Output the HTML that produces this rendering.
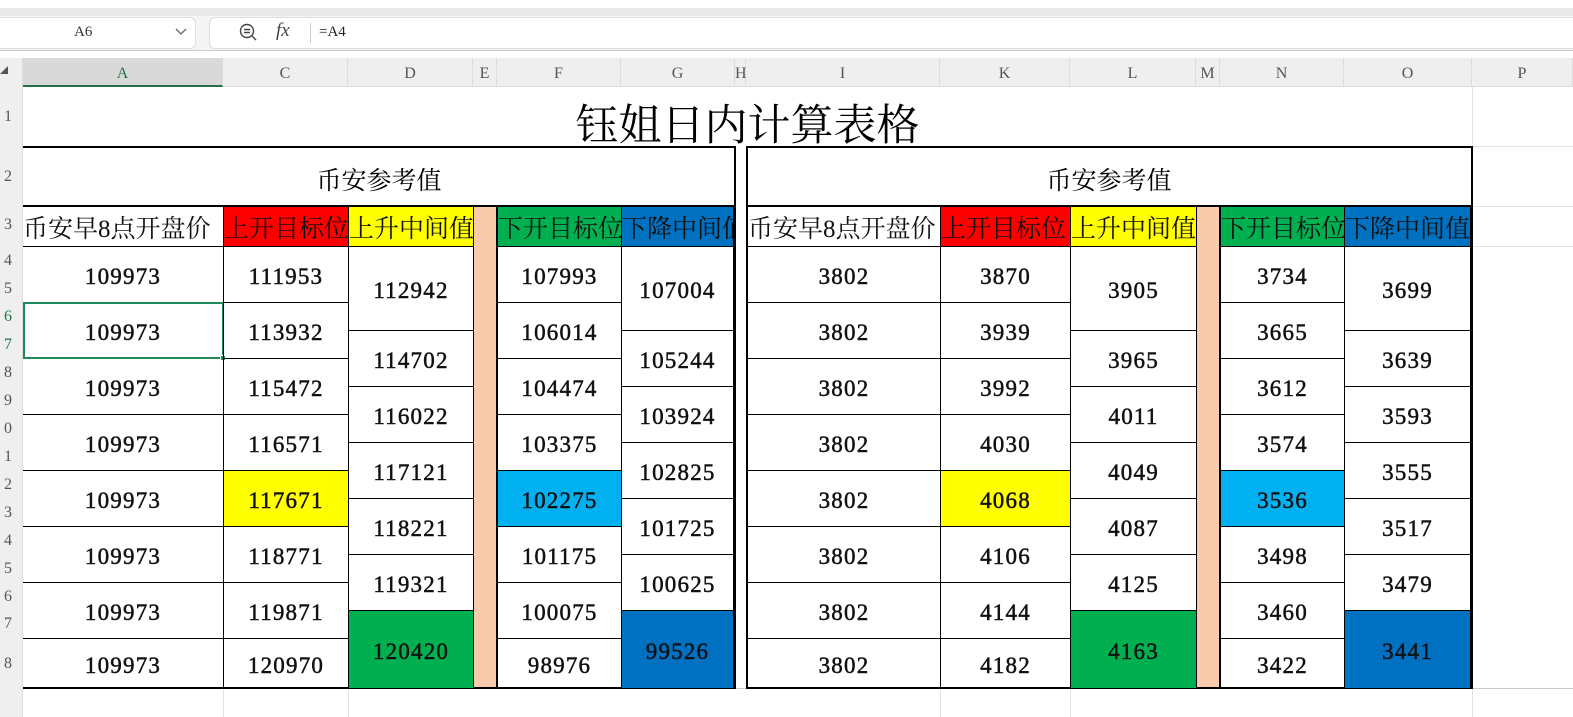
<!DOCTYPE html>
<html><head><meta charset="utf-8"><style>
*{margin:0;padding:0;box-sizing:border-box}
body{width:1573px;height:717px;position:relative;overflow:hidden;background:#fff;font-family:"Liberation Serif","Noto Serif CJK SC",serif}
.a{position:absolute}
.c{position:absolute;border:1px solid #000;display:flex;align-items:center;justify-content:center;font-size:23px;font-weight:normal;-webkit-text-stroke:0.5px #111;letter-spacing:1.2px;padding-top:5px;color:#111;white-space:nowrap;overflow:hidden}
.h{font-weight:normal;-webkit-text-stroke:0;letter-spacing:0;padding-top:0;font-size:25px;font-family:"Liberation Serif","Noto Serif CJK SC",serif;justify-content:flex-start}
.ch{position:absolute;top:58px;height:29px;line-height:32px;font-size:16px;color:#555;text-align:center;border-right:1px solid #ddd}
.rn{position:absolute;left:0;width:12px;text-align:right;font-size:16px;color:#555;overflow:hidden;direction:rtl}
.y{background:#ffff00}.r{background:#ff0000}.g{background:#00b050}.b{background:#0070c0}.lb{background:#00b0f0}.p{background:#f8cbad}
</style></head><body>
<div class="a" style="left:0;top:0;width:1573px;height:8px;background:#fff"></div>
<div class="a" style="left:0;top:8px;width:1573px;height:8px;background:#e9e9e9"></div>
<div class="a" style="left:0;top:16px;width:1573px;height:34px;background:#f5f5f5"></div>
<div class="a" style="left:-10px;top:17px;width:206px;height:32px;background:#fff;border:1px solid #ddd;border-radius:6px"></div>
<div class="a" style="left:74px;top:24px;font-size:15px;color:#333">A6</div>
<svg class="a" style="left:175px;top:27px" width="12" height="10"><path d="M1 2 L6 7 L11 2" stroke="#666" fill="none" stroke-width="1.3"/></svg>
<div class="a" style="left:209px;top:17px;width:1370px;height:32px;background:#fff;border:1px solid #ddd;border-radius:6px"></div>
<svg class="a" style="left:238px;top:22px" width="20" height="20"><circle cx="9" cy="9" r="6.5" stroke="#444" fill="none" stroke-width="1.4"/><path d="M6 7.5h6M6 10.5h6M14 14l4 4" stroke="#444" stroke-width="1.4"/></svg>
<div class="a" style="left:276px;top:20px;font-size:19px;font-style:italic;color:#444">fx</div>
<div class="a" style="left:310px;top:23px;width:1px;height:20px;background:#ccc"></div>
<div class="a" style="left:319px;top:24px;font-size:15px;color:#222">=A4</div>
<div class="a" style="left:0;top:50px;width:1573px;height:1px;background:#ccc"></div>
<div class="a" style="left:0;top:58px;width:1573px;height:29px;background:#efefef;border-bottom:1px solid #ddd"></div>
<div class="a" style="left:0;top:58px;width:23px;height:659px;background:#efefef;border-right:1px solid #ddd"></div>
<div class="a" style="left:0;top:66px;width:0;height:0;border-left:8px solid transparent;border-bottom:8px solid #555"></div>
<div class="ch" style="left:23px;width:200px;background:#d9d9d9;border-bottom:2px solid #217346;color:#217346">A</div>
<div class="ch" style="left:223px;width:125px">C</div>
<div class="ch" style="left:348px;width:125px">D</div>
<div class="ch" style="left:473px;width:24px">E</div>
<div class="ch" style="left:497px;width:124px">F</div>
<div class="ch" style="left:621px;width:114px">G</div>
<div class="ch" style="left:735px;width:11px">H</div>
<div class="ch" style="left:746px;width:194px">I</div>
<div class="ch" style="left:940px;width:130px">K</div>
<div class="ch" style="left:1070px;width:126px">L</div>
<div class="ch" style="left:1196px;width:24px">M</div>
<div class="ch" style="left:1220px;width:124px">N</div>
<div class="ch" style="left:1344px;width:128px">O</div>
<div class="ch" style="left:1472px;width:101px">P</div>
<div class="rn" style="top:108px">1</div><div class="rn" style="top:168px">2</div><div class="rn" style="top:216px">3</div>
<div class="rn" style="top:252px">4</div><div class="rn" style="top:280px">5</div><div class="rn" style="top:308px;color:#217346">6</div><div class="rn" style="top:336px;color:#217346">7</div>
<div class="rn" style="top:364px">8</div><div class="rn" style="top:392px">9</div><div class="rn" style="top:420px">0</div><div class="rn" style="top:448px">1</div>
<div class="rn" style="top:476px">2</div><div class="rn" style="top:504px">3</div><div class="rn" style="top:532px">4</div><div class="rn" style="top:560px">5</div>
<div class="rn" style="top:588px">6</div><div class="rn" style="top:615px">7</div><div class="rn" style="top:655px">8</div>
<div class="a" style="left:1472px;top:87px;width:1px;height:630px;background:#e2e2e2"></div>
<div class="a" style="left:1472px;top:146px;width:101px;height:1px;background:#e2e2e2"></div>
<div class="a" style="left:1472px;top:206px;width:101px;height:1px;background:#e2e2e2"></div>
<div class="a" style="left:1472px;top:246px;width:101px;height:1px;background:#e2e2e2"></div>
<div class="a" style="left:23px;top:688px;width:1550px;height:1px;background:#ccc"></div>
<div class="a" style="left:223px;top:688px;width:1px;height:29px;background:#e2e2e2"></div>
<div class="a" style="left:348px;top:688px;width:1px;height:29px;background:#e2e2e2"></div>
<div class="a" style="left:940px;top:688px;width:1px;height:29px;background:#e2e2e2"></div>
<div class="a" style="left:1070px;top:688px;width:1px;height:29px;background:#e2e2e2"></div>
<div class="a" style="left:23px;top:92px;width:1449px;text-align:center;font-size:43px;font-family:'Noto Serif CJK SC',serif;color:#000">钰姐日内计算表格</div>
<!-- LEFT TABLE -->
<div class="a" style="left:23px;top:146px;width:713px;height:543px;border:2px solid #000;border-left:none"></div>
<div class="a" style="left:23px;top:205px;width:712px;height:2px;background:#000"></div>
<div class="a" style="left:23px;top:161px;width:712px;text-align:center;font-size:25px;font-family:'Noto Serif CJK SC',serif">币安参考值</div>
<div class="c h" style="left:23px;top:206px;width:201px;height:41px;border-left:none">币安早8点开盘价</div>
<div class="c h r" style="left:223px;top:206px;width:126px;height:41px">上开目标位</div>
<div class="c h y" style="left:348px;top:206px;width:126px;height:41px">上升中间值</div>
<div class="a p" style="left:473px;top:206px;width:24px;height:482px;border:1px solid #000"></div>
<div class="c h g" style="left:497px;top:206px;width:125px;height:41px">下开目标位</div>
<div class="c h b" style="left:621px;top:206px;width:113px;height:41px">下降中间值</div>
<div class="c" style="left:23px;top:246px;width:201px;height:57px;border-left:none">109973</div>
<div class="c" style="left:23px;top:302px;width:201px;height:57px;border-left:none">109973</div>
<div class="c" style="left:23px;top:358px;width:201px;height:57px;border-left:none">109973</div>
<div class="c" style="left:23px;top:414px;width:201px;height:57px;border-left:none">109973</div>
<div class="c" style="left:23px;top:470px;width:201px;height:57px;border-left:none">109973</div>
<div class="c" style="left:23px;top:526px;width:201px;height:57px;border-left:none">109973</div>
<div class="c" style="left:23px;top:582px;width:201px;height:57px;border-left:none">109973</div>
<div class="c" style="left:23px;top:638px;width:201px;height:50px;border-left:none;border-bottom:none">109973</div>
<div class="a" style="left:23px;top:302px;width:201px;height:57px;border:2px solid #1e8a5a"></div>
<div class="a" style="left:220px;top:355px;width:6px;height:6px;background:#1e8a5a;border:1px solid #fff"></div>
<div class="c" style="left:223px;top:246px;width:126px;height:57px">111953</div>
<div class="c" style="left:223px;top:302px;width:126px;height:57px">113932</div>
<div class="c" style="left:223px;top:358px;width:126px;height:57px">115472</div>
<div class="c" style="left:223px;top:414px;width:126px;height:57px">116571</div>
<div class="c y" style="left:223px;top:470px;width:126px;height:57px">117671</div>
<div class="c" style="left:223px;top:526px;width:126px;height:57px">118771</div>
<div class="c" style="left:223px;top:582px;width:126px;height:57px">119871</div>
<div class="c" style="left:223px;top:638px;width:126px;height:50px;border-bottom:none">120970</div>
<div class="c" style="left:348px;top:246px;width:126px;height:85px">112942</div>
<div class="c" style="left:348px;top:330px;width:126px;height:57px">114702</div>
<div class="c" style="left:348px;top:386px;width:126px;height:57px">116022</div>
<div class="c" style="left:348px;top:442px;width:126px;height:57px">117121</div>
<div class="c" style="left:348px;top:498px;width:126px;height:57px">118221</div>
<div class="c" style="left:348px;top:554px;width:126px;height:57px">119321</div>
<div class="c g" style="left:348px;top:610px;width:126px;height:78px;border-bottom:none">120420</div>
<div class="c" style="left:497px;top:246px;width:125px;height:57px">107993</div>
<div class="c" style="left:497px;top:302px;width:125px;height:57px">106014</div>
<div class="c" style="left:497px;top:358px;width:125px;height:57px">104474</div>
<div class="c" style="left:497px;top:414px;width:125px;height:57px">103375</div>
<div class="c lb" style="left:497px;top:470px;width:125px;height:57px">102275</div>
<div class="c" style="left:497px;top:526px;width:125px;height:57px">101175</div>
<div class="c" style="left:497px;top:582px;width:125px;height:57px">100075</div>
<div class="c" style="left:497px;top:638px;width:125px;height:50px;border-bottom:none">98976</div>
<div class="c" style="left:621px;top:246px;width:113px;height:85px">107004</div>
<div class="c" style="left:621px;top:330px;width:113px;height:57px">105244</div>
<div class="c" style="left:621px;top:386px;width:113px;height:57px">103924</div>
<div class="c" style="left:621px;top:442px;width:113px;height:57px">102825</div>
<div class="c" style="left:621px;top:498px;width:113px;height:57px">101725</div>
<div class="c" style="left:621px;top:554px;width:113px;height:57px">100625</div>
<div class="c b" style="left:621px;top:610px;width:113px;height:78px;border-bottom:none">99526</div>
<!-- RIGHT TABLE -->
<div class="a" style="left:746px;top:146px;width:727px;height:543px;border:2px solid #000"></div>
<div class="a" style="left:746px;top:205px;width:726px;height:2px;background:#000"></div>
<div class="a" style="left:746px;top:161px;width:726px;text-align:center;font-size:25px;font-family:'Noto Serif CJK SC',serif">币安参考值</div>
<div class="c h" style="left:747px;top:206px;width:194px;height:41px">币安早8点开盘价</div>
<div class="c h r" style="left:940px;top:206px;width:131px;height:41px">上开目标位</div>
<div class="c h y" style="left:1070px;top:206px;width:127px;height:41px">上升中间值</div>
<div class="a p" style="left:1196px;top:206px;width:24px;height:482px;border:1px solid #000"></div>
<div class="c h g" style="left:1220px;top:206px;width:125px;height:41px">下开目标位</div>
<div class="c h b" style="left:1344px;top:206px;width:127px;height:41px">下降中间值</div>
<div class="c" style="left:747px;top:246px;width:194px;height:57px">3802</div>
<div class="c" style="left:747px;top:302px;width:194px;height:57px">3802</div>
<div class="c" style="left:747px;top:358px;width:194px;height:57px">3802</div>
<div class="c" style="left:747px;top:414px;width:194px;height:57px">3802</div>
<div class="c" style="left:747px;top:470px;width:194px;height:57px">3802</div>
<div class="c" style="left:747px;top:526px;width:194px;height:57px">3802</div>
<div class="c" style="left:747px;top:582px;width:194px;height:57px">3802</div>
<div class="c" style="left:747px;top:638px;width:194px;height:50px;border-bottom:none">3802</div>
<div class="c" style="left:940px;top:246px;width:131px;height:57px">3870</div>
<div class="c" style="left:940px;top:302px;width:131px;height:57px">3939</div>
<div class="c" style="left:940px;top:358px;width:131px;height:57px">3992</div>
<div class="c" style="left:940px;top:414px;width:131px;height:57px">4030</div>
<div class="c y" style="left:940px;top:470px;width:131px;height:57px">4068</div>
<div class="c" style="left:940px;top:526px;width:131px;height:57px">4106</div>
<div class="c" style="left:940px;top:582px;width:131px;height:57px">4144</div>
<div class="c" style="left:940px;top:638px;width:131px;height:50px;border-bottom:none">4182</div>
<div class="c" style="left:1070px;top:246px;width:127px;height:85px">3905</div>
<div class="c" style="left:1070px;top:330px;width:127px;height:57px">3965</div>
<div class="c" style="left:1070px;top:386px;width:127px;height:57px">4011</div>
<div class="c" style="left:1070px;top:442px;width:127px;height:57px">4049</div>
<div class="c" style="left:1070px;top:498px;width:127px;height:57px">4087</div>
<div class="c" style="left:1070px;top:554px;width:127px;height:57px">4125</div>
<div class="c g" style="left:1070px;top:610px;width:127px;height:78px;border-bottom:none">4163</div>
<div class="c" style="left:1220px;top:246px;width:125px;height:57px">3734</div>
<div class="c" style="left:1220px;top:302px;width:125px;height:57px">3665</div>
<div class="c" style="left:1220px;top:358px;width:125px;height:57px">3612</div>
<div class="c" style="left:1220px;top:414px;width:125px;height:57px">3574</div>
<div class="c lb" style="left:1220px;top:470px;width:125px;height:57px">3536</div>
<div class="c" style="left:1220px;top:526px;width:125px;height:57px">3498</div>
<div class="c" style="left:1220px;top:582px;width:125px;height:57px">3460</div>
<div class="c" style="left:1220px;top:638px;width:125px;height:50px;border-bottom:none">3422</div>
<div class="c" style="left:1344px;top:246px;width:127px;height:85px">3699</div>
<div class="c" style="left:1344px;top:330px;width:127px;height:57px">3639</div>
<div class="c" style="left:1344px;top:386px;width:127px;height:57px">3593</div>
<div class="c" style="left:1344px;top:442px;width:127px;height:57px">3555</div>
<div class="c" style="left:1344px;top:498px;width:127px;height:57px">3517</div>
<div class="c" style="left:1344px;top:554px;width:127px;height:57px">3479</div>
<div class="c b" style="left:1344px;top:610px;width:127px;height:78px;border-bottom:none">3441</div>
</body></html>
